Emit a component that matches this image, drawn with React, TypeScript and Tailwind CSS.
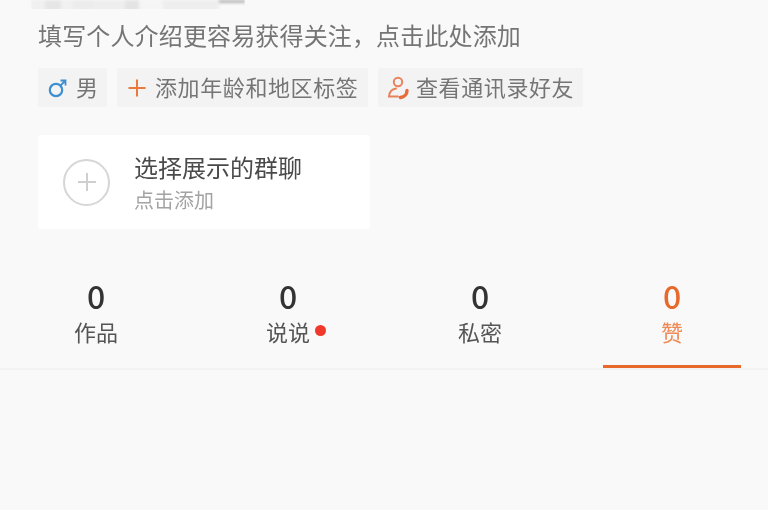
const tabs = [
  { count: "0", label: "作品" },
  { count: "0", label: "说说", dot: true },
  { count: "0", label: "私密" },
  { count: "0", label: "赞", active: true },
];

function MaleIcon() {
  return (
    <svg width="20" height="20" viewBox="0 0 20 20" fill="none" stroke="#3d8fd1" strokeWidth="2.2">
      <circle cx="8" cy="12" r="6.2" />
      <path d="M12.5 7.5 L17 3 M12.5 2.5 H17.5 V7.5" strokeWidth="1.8" />
    </svg>
  );
}

function PlusIcon() {
  return (
    <svg width="20" height="20" viewBox="0 0 20 20" stroke="#ea7a3c" strokeWidth="2">
      <path d="M10 1.5 V18.5 M1.5 10 H18.5" />
    </svg>
  );
}

function ContactIcon() {
  return (
    <svg width="24" height="24" viewBox="0 0 24 24" fill="none" stroke="#e8825a" strokeWidth="2" strokeLinecap="round">
      <circle cx="11" cy="6" r="4.2" />
      <path d="M9 12.5 C5 13 2.5 15.5 2 20.5 H11" />
      <path d="M20 14.5 C20 18 17.5 21 13.5 21.5" strokeWidth="3.4" stroke="#e86c3a" />
    </svg>
  );
}

export default function App() {
  return (
    <main className="h-[510px] w-[768px] overflow-hidden bg-[#f9f9f9] blur-[0.4px] font-['Noto_Sans_CJK_SC','Liberation_Sans',sans-serif]">
      {/* blurred nickname strip */}
      <div className="ml-[31px] h-[9px] w-[214px] overflow-hidden">
        <div className="flex h-[14px] blur-[1.5px]">
          <div className="h-full w-[14px] bg-[#f0f0f0]" />
          <div className="h-full w-[16px] bg-[#e6e6e6]" />
          <div className="h-full w-[12px] bg-[#f1f1f1]" />
          <div className="h-full w-[20px] bg-[#ececec]" />
          <div className="h-full w-[32px] bg-[#eeeeee]" />
          <div className="h-full w-[14px] bg-[#e4e4e4]" />
          <div className="h-full w-[24px] bg-[#f5f5f5]" />
          <div className="h-full w-[56px] bg-[#eeeeee]" />
          <div className="h-[3px] w-[26px] bg-[#b5b5b5]" />
        </div>
      </div>

      <p className="ml-[38px] mt-[10px] h-[32px] text-[24px] leading-[32px] tracking-[0.15px] whitespace-nowrap text-[#757575]">
        填写个人介绍更容易获得关注，点击此处添加
      </p>

      <div className="ml-[38px] mt-[17px] flex gap-[10px]">
        <div className="flex h-[39px] w-[69px] items-center gap-[8px] rounded-[2px] bg-[#f3f3f3] pl-[10px] text-[22px] text-[#757575]">
          <MaleIcon />
          <span className="mb-[2px]">男</span>
        </div>
        <div className="flex h-[39px] w-[251px] items-center gap-[8px] rounded-[2px] bg-[#f3f3f3] pl-[10px] text-[22px] tracking-[0.6px] whitespace-nowrap text-[#757575]">
          <PlusIcon />
          <span className="mb-[2px]">添加年龄和地区标签</span>
        </div>
        <div className="flex h-[39px] w-[205px] items-center gap-[5px] rounded-[2px] bg-[#f3f3f3] pl-[9px] text-[22px] tracking-[0.6px] whitespace-nowrap text-[#757575]">
          <ContactIcon />
          <span className="mb-[2px]">查看通讯录好友</span>
        </div>
      </div>

      <div className="ml-[38px] mt-[28px] flex h-[94px] w-[332px] items-center rounded-[2px] bg-white">
        <div className="ml-[25px] flex h-[47px] w-[47px] items-center justify-center rounded-full border-2 border-[#d6d6d6]">
          <svg width="20" height="20" viewBox="0 0 20 20" stroke="#cfcfcf" strokeWidth="2">
            <path d="M10 1 V19 M1 10 H19" />
          </svg>
        </div>
        <div className="ml-[24px] flex flex-col">
          <span className="mb-[2px] text-[24px] leading-[32px] whitespace-nowrap text-[#4a4a4a]">选择展示的群聊</span>
          <span className="mt-[2px] text-[20px] leading-[26px] whitespace-nowrap text-[#a3a3a3]">点击添加</span>
        </div>
      </div>

      <div className="mt-[47px] grid h-[94px] grid-cols-4 border-b-2 border-[#f3f3f3]">
        {tabs.map((tab) => (
          <div key={tab.label} className="relative flex flex-col items-center">
            <span className={`mt-[3px] text-[32px] leading-[32px] font-medium ${tab.active ? "text-[#e8692c]" : "text-[#333333]"}`}>
              {tab.count}
            </span>
            <span className={`relative mt-[5px] text-[22px] leading-[30px] ${tab.active ? "text-[#ee8a55]" : "text-[#555555]"}`}>
              {tab.label}
              {tab.dot && <span className="absolute top-[9px] left-[49px] h-[11px] w-[11px] rounded-full bg-[#f0392b]" />}
            </span>
            {tab.active && <div className="absolute right-[27px] bottom-[0px] left-[27px] h-[3px] bg-[#e8692c]" />}
          </div>
        ))}
      </div>
    </main>
  );
}
